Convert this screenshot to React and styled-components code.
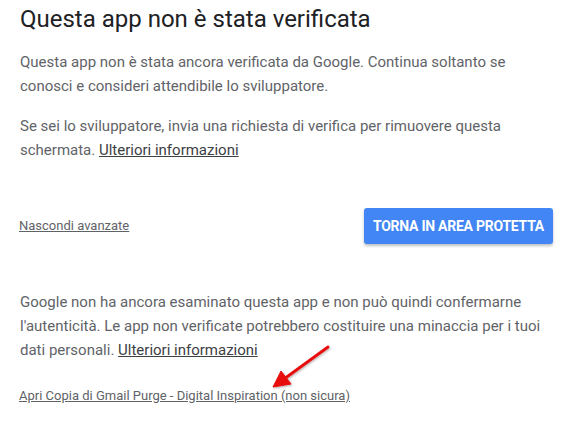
import React from 'react';
import styled, { createGlobalStyle } from 'styled-components';

const GlobalStyle = createGlobalStyle`
  html, body {
    margin: 0;
    padding: 0;
    background: #fff;
  }
  body {
    font-family: Roboto, "Liberation Sans", Arial, sans-serif;
    -webkit-font-smoothing: antialiased;
  }
`

const Page = styled.div`
  position: relative;
  width: 572px;
  height: 423px;
  overflow: hidden;
  box-sizing: border-box;
  padding: 0 18px 0 20px;
`
const Title = styled.h1`
  margin: 0;
  padding-top: 4px;
  font-size: 24px;
  line-height: 30px;
  font-weight: 400;
  color: #202124;
`
const Text = styled.p`
  margin: ${p => p.$top || 0}px 0 0;
  font-size: 15px;
  line-height: 24px;
  color: #5f6368;
`
const TextLink = styled.a`
  color: #3c4043;
  text-decoration: underline;
  cursor: pointer;
`
const ActionRow = styled.div`
  display: flex;
  align-items: center;
  justify-content: space-between;
  margin-top: 46px;
`
const SmallLink = styled.a`
  font-size: 13px;
  line-height: 18px;
  color: #5f6368;
  text-decoration: underline;
  cursor: pointer;
  margin-left: -1px;
`
const BackButton = styled.button`
  height: 36px;
  padding: 0 9px;
  margin-right: 1px;
  border: none;
  border-radius: 3px;
  background: #4285f4;
  color: #fff;
  font-family: inherit;
  font-size: 14px;
  font-weight: 700;
  letter-spacing: -0.25px;
  box-shadow: 0 2px 3px rgba(0, 0, 0, 0.25);
  cursor: pointer;
`
const Arrow = styled.svg`
  position: absolute;
  left: 0;
  top: 0;
  pointer-events: none;
`

export default function App() {
  return (
    <>
      <GlobalStyle />
      <Page>
        <Title>Questa app non è stata verificata</Title>
        <Text $top={16}>
          Questa app non è stata ancora verificata da Google. Continua soltanto se
          conosci e consideri attendibile lo sviluppatore.
        </Text>
        <Text $top={16}>
          Se sei lo sviluppatore, invia una richiesta di verifica per rimuovere questa
          schermata. <TextLink>Ulteriori informazioni</TextLink>
        </Text>
        <ActionRow>
          <SmallLink>Nascondi avanzate</SmallLink>
          <BackButton>TORNA IN AREA PROTETTA</BackButton>
        </ActionRow>
        <Text $top={46}>
          Google non ha ancora esaminato questa app e non può quindi confermarne
          l'autenticità. Le app non verificate potrebbero costituire una minaccia per i tuoi
          dati personali. <TextLink>Ulteriori informazioni</TextLink>
        </Text>
        <Text $top={21}>
          <SmallLink>Apri Copia di Gmail Purge - Digital Inspiration (non sicura)</SmallLink>
        </Text>
        <Arrow width="572" height="423" viewBox="0 0 572 423">
          <defs>
            <filter id="shade" x="-20%" y="-20%" width="140%" height="140%">
              <feDropShadow dx="1" dy="1" stdDeviation="1" floodColor="#000" floodOpacity="0.3" />
            </filter>
          </defs>
          <g filter="url(#shade)" fill="#e8100f" stroke="#e8100f">
            <line x1="328" y1="347" x2="284" y2="379" strokeWidth="2.8" strokeLinecap="round" />
            <polygon points="273,387 281,371 291,384" strokeWidth="1" strokeLinejoin="round" />
          </g>
        </Arrow>
      </Page>
    </>
  );
}
